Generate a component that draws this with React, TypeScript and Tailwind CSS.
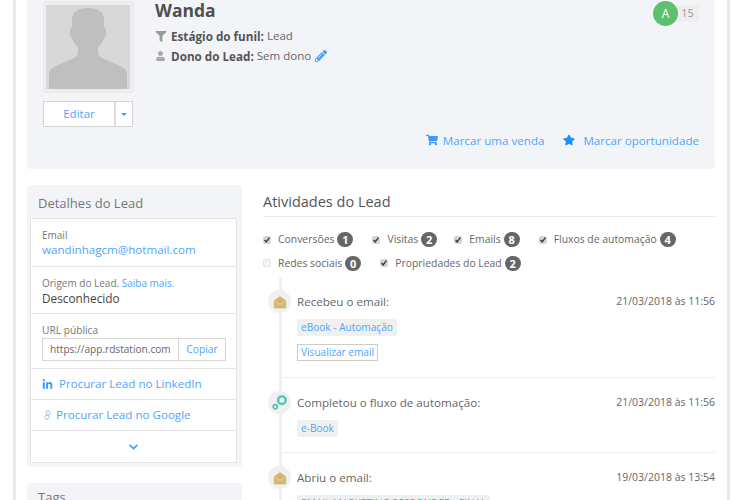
import React from 'react';
import { FaShoppingCart, FaStar, FaPencilAlt, FaLinkedinIn, FaChevronDown, FaFilter, FaUser } from 'react-icons/fa';

const Badge = ({ n }: { n: number }) => (
  <span className="ml-[3px] inline-flex h-[15px] min-w-[16px] items-center justify-center rounded-full bg-[#666] px-[4px] text-[11px] font-bold leading-none text-white">
    {n}
  </span>
);

const Check = ({ label, n, on = true, className = '' }: { label: string; n: number; on?: boolean; className?: string }) => (
  <div className={`flex items-center text-[10.4px] text-[#666] ${className}`}>
    <span className={`mr-[7px] flex h-[8px] w-[8px] items-center justify-center rounded-[2px] ${on ? 'bg-[#d4d4d4]' : 'border border-[#e2e2e2] bg-[#f4f4f4]'}`}>
      {on && (
        <svg viewBox="0 0 10 10" className="h-[8px] w-[8px]">
          <path d="M2 5 L4 7.5 L8 2" fill="none" stroke="#333" strokeWidth="1.6" />
        </svg>
      )}
    </span>
    {label}
    <Badge n={n} />
  </div>
);

const MailIcon = () => (
  <svg viewBox="0 0 16 16" className="h-[14px] w-[14px]">
    <path d="M1 6.5 L8 1 L15 6.5 V15 H1 Z" fill="#d3b26d" />
    <path d="M2 14 L6.5 9.5 M14 14 L9.5 9.5 M2 7 L8 11 L14 7" fill="none" stroke="#e9d9b6" strokeWidth="0.9" />
  </svg>
);

const GearsIcon = () => (
  <svg viewBox="0 0 18 18" className="h-[17px] w-[17px]">
    <circle cx="11.5" cy="6.5" r="4" fill="none" stroke="#4fc7b8" strokeWidth="2.6" />
    <circle cx="4.5" cy="13.5" r="2.2" fill="none" stroke="#4fc7b8" strokeWidth="1.8" />
  </svg>
);

const Activity = ({ icon, title, date, children, last = false }: { icon: React.ReactNode; title: string; date: string; children?: React.ReactNode; last?: boolean }) => (
  <div className={`relative pl-[15px] ${last ? '' : 'border-b border-[#eeeeee]'}`}>
    <span className="absolute left-[-14px] top-0 flex h-[23px] w-[23px] items-center justify-center rounded-full bg-[#f0f0f0]">{icon}</span>
    <div className="flex h-[23px] items-center justify-between text-[#666]">
      <span className="text-[11.6px]">{title}</span>
      <span className="text-[10.5px]">{date}</span>
    </div>
    {children}
  </div>
);

const Tag = ({ children }: { children: React.ReactNode }) => (
  <span className="inline-block h-[17px] rounded-[2px] bg-[#f0f0f0] px-[4px] text-[10.1px] leading-[17px] text-[#4da6ff]">{children}</span>
);

const App: React.FC = () => {
  return (
    <div className="h-[500px] w-[751px] overflow-hidden bg-white px-[13px] text-[#555] [font-family:'Open_Sans',sans-serif]">
      <div className="h-full w-[717px] border-x-[3px] border-[#e6e9f0] px-[11px]">
        {/* header card */}
        <div className="flex h-[169px] w-[688px] justify-between rounded-b-[4px] bg-[#f3f4f8] pl-[16px] pr-[16px] pt-[1px]">
          <div className="flex">
            <div className="w-[91px]">
              <div className="h-[92px] w-[91px] rounded-[3px] border border-[#e6e8ed] bg-[#eceef2] pb-[2px] pl-[2px] pr-[3px] pt-[3px]">
                <svg viewBox="0 0 84 84" className="h-[84px] w-[84px] bg-[#d8d8d8]">
                  <path d="M3 84 V68 Q4 63 12 60 L28 53 Q32 51 32 47 V42 Q27 38 26 33 Q24 32 24 26 Q24 23 26 22 V14 Q27 3 42 3 Q57 3 58 14 V22 Q60 23 60 26 Q60 32 58 33 Q57 38 52 42 V47 Q52 51 56 53 L72 60 Q80 63 81 68 V84 Z" fill="#bfbfbf" />
                </svg>
              </div>
              <div className="mt-[8px] flex h-[26px] w-[90px] border border-[#d5d5d5] bg-white">
                <button className="w-[72px] border-r-[2px] border-[#dedede] text-[11.5px] text-[#4da6ff]">Editar</button>
                <span className="flex flex-1 items-center justify-center">
                  <span className="h-0 w-0 border-x-[3px] border-t-[3px] border-x-transparent border-t-[#3d9bf5]" />
                </span>
              </div>
            </div>
            <div className="ml-[21px]">
              <h1 className="text-[17.5px] font-bold leading-[18px] text-[#4f4f4f]">Wanda</h1>
              <div className="mt-[9px] flex items-center text-[11.5px] leading-[16px] text-[#666]">
                <FaFilter className="mr-[4px] h-[11px] w-[12px] text-[#999]" />
                <b className="mr-[3px] text-[11.7px] text-[#555]">Estágio do funil:</b> Lead
              </div>
              <div className="mt-[4px] flex items-center text-[11.5px] leading-[16px] text-[#666]">
                <FaUser className="mr-[5px] h-[10px] w-[11px] text-[#aaa]" />
                <b className="mr-[3px] text-[11.7px] text-[#555]">Dono do Lead:</b> Sem dono
                <FaPencilAlt className="ml-[4px] h-[12px] w-[12px] text-[#4a9df0]" />
              </div>
            </div>
          </div>
          <div className="flex flex-col items-end justify-between pb-[20px]">
            <div className="flex items-center">
              <span className="relative z-10 flex h-[25px] w-[25px] items-center justify-center rounded-full bg-[#5cc06f] text-[12px] text-white">A</span>
              <span className="-ml-[2px] flex h-[17px] w-[23px] items-center justify-center bg-[#eeeeee] text-[11px] text-[#999]">15</span>
            </div>
            <div className="flex items-center text-[11.6px] text-[#4da6ff]">
              <FaShoppingCart className="mr-[5px] h-[12px] w-[12px] text-[#3d9bf5]" />
              Marcar uma venda
              <FaStar className="ml-[19px] mr-[8px] h-[12px] w-[12px] text-[#1e90f5]" />
              Marcar oportunidade
            </div>
          </div>
        </div>

        <div className="mt-[16px] flex w-[688px] justify-between">
          {/* left column */}
          <div className="w-[215px]">
            <div className="rounded-[4px] bg-[#f3f4f8] pb-[4px] pl-[3px] pr-[5px]">
              <h2 className="pl-[8px] pt-[9px] text-[13px] leading-[18px] text-[#777]">Detalhes do Lead</h2>
              <div className="mt-[6px] w-[207px] border border-[#e4e4e4] bg-white">
                <div className="h-[48px] border-b border-[#e4e4e4] px-[11px] pt-[10px]">
                  <div className="text-[10px] leading-[12px] text-[#777]">Email</div>
                  <div className="text-[11.6px] leading-[18px] text-[#4da6ff]">wandinhagcm@hotmail.com</div>
                </div>
                <div className="h-[47px] border-b border-[#e4e4e4] px-[11px] pt-[10px]">
                  <div className="text-[10px] leading-[12px] text-[#777]">
                    Origem do Lead. <span className="text-[#4da6ff]">Saiba mais.</span>
                  </div>
                  <div className="text-[11.8px] leading-[18px] text-[#444]">Desconhecido</div>
                </div>
                <div className="h-[55px] border-b border-[#e4e4e4] px-[11px] pt-[10px]">
                  <div className="text-[10.2px] leading-[12px] text-[#777]">URL pública</div>
                  <div className="mt-[2px] flex h-[23px] w-[184px]">
                    <span className="flex w-[137px] items-center overflow-hidden whitespace-nowrap border border-[#d5d5d5] pl-[7px] text-[10.1px] text-[#666]">https://app.rdstation.com</span>
                    <span className="flex flex-1 items-center justify-center border border-l-0 border-[#d5d5d5] text-[10.3px] text-[#4da6ff]">Copiar</span>
                  </div>
                </div>
                <div className="flex h-[31px] items-center border-b border-[#e4e4e4] pl-[11px] text-[11.6px] text-[#4da6ff]">
                  <FaLinkedinIn className="mr-[6px] h-[11px] w-[11px] text-[#3d9bf5]" />
                  Procurar Lead no LinkedIn
                </div>
                <div className="flex h-[31px] items-center border-b border-[#e4e4e4] pl-[13px] text-[11.6px] text-[#4da6ff]">
                  <svg viewBox="0 0 8 12" className="mr-[5px] h-[12px] w-[7px]">
                    <ellipse cx="4.6" cy="3.4" rx="2.2" ry="2.4" fill="none" stroke="#8fbff0" strokeWidth="1" />
                    <ellipse cx="3.4" cy="8.6" rx="2.6" ry="2.4" fill="none" stroke="#8fbff0" strokeWidth="1" />
                  </svg>
                  Procurar Lead no Google
                </div>
                <div className="flex h-[31px] items-center justify-center">
                  <FaChevronDown className="h-[10px] w-[11px] text-[#3d9bf5]" />
                </div>
              </div>
            </div>
            <div className="mt-[16px] h-[40px] rounded-[4px] bg-[#f3f4f8] pl-[11px] pt-[5px] text-[13px] text-[#777]">Tags</div>
          </div>

          {/* right column */}
          <div className="w-[452px]">
            <h2 className="border-b border-[#e8e8e8] pb-[4px] pt-[7px] text-[14.5px] leading-[20px] text-[#555]">Atividades do Lead</h2>
            <div className="mt-[15px] flex">
              <Check label="Conversões" n={1} />
              <Check label="Visitas" n={2} className="ml-[19px]" />
              <Check label="Emails" n={8} className="ml-[17px]" />
              <Check label="Fluxos de automação" n={4} className="ml-[19px]" />
            </div>
            <div className="mt-[8px] flex">
              <Check label="Redes sociais" n={0} on={false} />
              <Check label="Propriedades do Lead" n={2} className="ml-[19px]" />
            </div>
            <div className="ml-[16px] mt-[7px] border-l-[3px] border-[#f0f0f0] pt-[12px]">
              <Activity icon={<MailIcon />} title="Recebeu o email:" date="21/03/2018 às 11:56">
                <div className="mt-[6px] flex">
                  <Tag>eBook - Automação</Tag>
                </div>
                <div className="mb-[16px] mt-[8px] flex">
                  <span className="inline-block h-[17px] border border-[#ccc] bg-white px-[3px] text-[10.1px] leading-[15px] text-[#4da6ff]">Visualizar email</span>
                </div>
              </Activity>
              <div className="pt-[13px]">
                <Activity icon={<GearsIcon />} title="Completou o fluxo de automação:" date="21/03/2018 às 11:56">
                  <div className="mb-[15px] mt-[6px] flex">
                    <Tag>e-Book</Tag>
                  </div>
                </Activity>
              </div>
              <div className="pt-[13px]">
                <Activity icon={<MailIcon />} title="Abriu o email:" date="19/03/2018 às 13:54" last>
                  <div className="mt-[6px] flex">
                    <Tag>EMAIL MARKETING RESPONDER - FINAL</Tag>
                  </div>
                </Activity>
              </div>
            </div>
          </div>
        </div>
      </div>
    </div>
  );
};

export default App;
